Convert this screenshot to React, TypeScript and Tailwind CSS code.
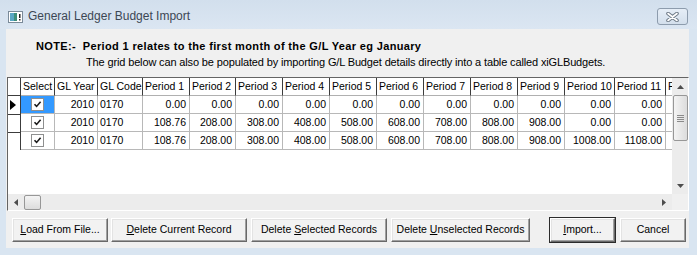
import React from 'react'

type Col = { label: string; w: number }

const COLS: Col[] = [
  { label: 'Select', w: 34 },
  { label: 'GL Year', w: 43 },
  { label: 'GL Code', w: 45 },
  { label: 'Period 1', w: 47 },
  { label: 'Period 2', w: 46 },
  { label: 'Period 3', w: 47 },
  { label: 'Period 4', w: 47 },
  { label: 'Period 5', w: 47 },
  { label: 'Period 6', w: 47 },
  { label: 'Period 7', w: 47 },
  { label: 'Period 8', w: 47 },
  { label: 'Period 9', w: 47 },
  { label: 'Period 10', w: 50 },
  { label: 'Period 11', w: 51 },
]

const ROWS = [
  { year: 2010, code: '0170', p: [0, 0, 0, 0, 0, 0, 0, 0, 0, 0, 0] },
  { year: 2010, code: '0170', p: [108.76, 208, 308, 408, 508, 608, 708, 808, 908, 0, 0] },
  { year: 2010, code: '0170', p: [108.76, 208, 308, 408, 508, 608, 708, 808, 908, 1008, 1108] },
]

const font = { fontFamily: '"Liberation Sans", Arial, sans-serif' }

function CheckBox() {
  return (
    <div className="w-[13px] h-[13px] bg-white border border-[#8e8f8f] flex items-center justify-center">
      <svg width="9" height="9" viewBox="0 0 9 9">
        <path d="M1.5 4.2 L3.6 6.4 L7.6 1.8" stroke="#1a1a1a" strokeWidth="1.6" fill="none" />
      </svg>
    </div>
  )
}

function Btn({ w, children, primary }: { w: number; children: React.ReactNode; primary?: boolean }) {
  return (
    <div
      style={{ width: w }}
      className={
        'h-[24px] flex items-center justify-center text-[10.5px] text-black bg-[#f2f2f2] border-t border-l border-t-white border-l-white border-r border-b border-r-[#696969] border-b-[#696969] shadow-[inset_-1px_-1px_0_#a0a0a0,inset_1px_1px_0_#e3e3e3] ' +
        (primary ? 'outline outline-1 outline-[#2b2b2b]' : '')
      }
    >
      {children}
    </div>
  )
}

function Arrow({ dir }: { dir: 'up' | 'down' | 'left' | 'right' }) {
  const d = {
    up: 'M0 4 L3.5 0 L7 4 Z',
    down: 'M0 0 L7 0 L3.5 4 Z',
    left: 'M4 0 L4 7 L0 3.5 Z',
    right: 'M0 0 L4 3.5 L0 7 Z',
  }[dir]
  const vert = dir === 'up' || dir === 'down'
  return (
    <svg width={vert ? 7 : 4} height={vert ? 4 : 7} viewBox={vert ? '0 0 7 4' : '0 0 4 7'}>
      <path d={d} fill="#4d4d4d" />
    </svg>
  )
}

export default function App() {
  return (
    <div className="w-[697px] h-[255px] bg-[#d9e5f1] flex flex-col overflow-hidden" style={font}>
      {/* title bar */}
      <div className="h-[29px] flex items-center bg-gradient-to-b from-[#d2dfed] to-[#dbe6f2] shrink-0">
        <svg width="15" height="12" viewBox="0 0 15 12" className="ml-[8px] mt-[4px]">
          <rect x="0.5" y="0.5" width="14" height="11" fill="#fff" stroke="#7a8a99" />
          <rect x="2" y="2" width="7" height="8" fill="#3f8f7a" />
          <rect x="2" y="2" width="4" height="8" fill="#5aa6c4" />
          <rect x="11" y="3" width="1.5" height="4" fill="#222" />
          <rect x="11" y="8" width="1.5" height="1.5" fill="#222" />
        </svg>
        <span className="ml-[5px] mt-[3px] text-[12px] text-[#3c4754]">General Ledger Budget Import</span>
        <div className="ml-auto mr-[9px] mt-[4px] w-[31px] h-[17px] rounded-[3px] border border-[#8d9cad] bg-gradient-to-b from-[#e6eef7] to-[#d3dfec] flex items-center justify-center">
          <svg width="13" height="10" viewBox="0 0 13 10">
            <path d="M2 1.5 L11 8.5 M11 1.5 L2 8.5" stroke="#6f7b88" strokeWidth="3.6" strokeLinecap="round" />
            <path d="M2 1.5 L11 8.5 M11 1.5 L2 8.5" stroke="#ffffff" strokeWidth="1.6" strokeLinecap="round" />
          </svg>
        </div>
      </div>

      <div className="flex flex-1">
        {/* client area */}
        <div className="ml-[6px] w-[683px] h-[219px] bg-[#f0f0f0] flex flex-col">
          <div className="pt-[9px] pl-[30px] h-[25px] text-[11px] tracking-[0.35px] font-bold text-black whitespace-pre leading-[16px]">
            {'NOTE:-  Period 1 relates to the first month of the G/L Year eg January'}
          </div>
          <div className="pl-[80px] h-[23px] text-[11px] tracking-[-0.14px] text-black leading-[17px]">
            The grid below can also be populated by importing G/L Budget details directly into a table called xiGLBudgets.
          </div>

          {/* grid */}
          <div className="ml-[1px] w-[682px] h-[134px] bg-white border-t border-l border-[#646464] border-b border-r border-b-white border-r-white flex">
            <div className="flex-1 flex flex-col min-w-0">
              <div className="flex-1 overflow-hidden text-[10.5px] text-black">
                {/* header row */}
                <div className="flex h-[18px] w-max">
                  <div className="w-[13px] h-[18px] border-r border-b border-[#3c3c3c] shrink-0" />
                  {COLS.map((c) => (
                    <div
                      key={c.label}
                      style={{ width: c.w }}
                      className="h-[18px] shrink-0 border-r border-r-[#3c3c3c] border-b border-b-[#b0b0b0] pl-[2px] leading-[17px] whitespace-nowrap overflow-hidden"
                    >
                      {c.label}
                    </div>
                  ))}
                  <div className="w-[12px] h-[18px] shrink-0 border-b border-b-[#b0b0b0] pl-[2px] leading-[17px]">P</div>
                </div>
                {ROWS.map((r, i) => (
                  <div key={i} className="flex h-[18px] w-max">
                    <div
                      className={
                        'w-[13px] h-[18px] shrink-0 border-r border-[#3c3c3c] flex items-center pl-[2px] ' +
                        (i > 0 ? 'border-t border-t-[#3c3c3c]' : '')
                      }
                    >
                      {i === 0 && (
                        <svg width="6" height="10" viewBox="0 0 6 10">
                          <path d="M0 0 L6 5 L0 10 Z" fill="#000" />
                        </svg>
                      )}
                    </div>
                    <div
                      style={{ width: 34 }}
                      className={
                        'h-[18px] shrink-0 border-r border-b border-[#b8b8b8] flex items-center justify-center ' +
                        (i === 0 ? 'bg-[#3399ff]' : '')
                      }
                    >
                      <CheckBox />
                    </div>
                    <div style={{ width: 43 }} className="h-[18px] shrink-0 border-r border-b border-[#b8b8b8] text-right pr-[3px] leading-[17px]">
                      {r.year}
                    </div>
                    <div style={{ width: 45 }} className="h-[18px] shrink-0 border-r border-b border-[#b8b8b8] pl-[2px] leading-[17px]">
                      {r.code}
                    </div>
                    {r.p.map((v, j) => (
                      <div
                        key={j}
                        style={{ width: COLS[j + 3].w }}
                        className="h-[18px] shrink-0 border-r border-b border-[#b8b8b8] text-right pr-[3px] leading-[17px] whitespace-nowrap overflow-hidden"
                      >
                        {v.toFixed(2)}
                      </div>
                    ))}
                    <div className="w-[12px] h-[18px] shrink-0 border-b border-[#b8b8b8]" />
                  </div>
                ))}
              </div>
              {/* horizontal scrollbar */}
              <div className="h-[16px] bg-[#ececec] flex items-center shrink-0">
                <div className="w-[16px] h-[16px] flex items-center justify-center">
                  <Arrow dir="left" />
                </div>
                <div className="w-[17px] h-[15px] rounded-[2px] border border-[#979797] bg-gradient-to-b from-[#f4f4f4] to-[#dcdcdc]" />
                <div className="ml-auto w-[16px] h-[16px] flex items-center justify-center">
                  <Arrow dir="right" />
                </div>
              </div>
            </div>
            {/* vertical scrollbar */}
            <div className="w-[16px] flex flex-col shrink-0">
              <div className="flex-1 bg-[#ececec] flex flex-col items-center">
                <div className="h-[17px] flex items-center justify-center">
                  <Arrow dir="up" />
                </div>
                <div className="w-[15px] h-[46px] rounded-[2px] border border-[#979797] bg-gradient-to-r from-[#f4f4f4] to-[#dcdcdc] flex flex-col items-center justify-center gap-[1px]">
                  <div className="w-[7px] h-[1px] bg-[#8a8a8a]" />
                  <div className="w-[7px] h-[1px] bg-[#8a8a8a]" />
                  <div className="w-[7px] h-[1px] bg-[#8a8a8a]" />
                  <div className="w-[7px] h-[1px] bg-[#8a8a8a]" />
                </div>
                <div className="mt-auto h-[17px] flex items-center justify-center">
                  <Arrow dir="down" />
                </div>
              </div>
              <div className="h-[16px] bg-[#f0f0f0]" />
            </div>
          </div>

          {/* buttons */}
          <div className="flex items-center mt-[7px] pl-[6px]">
            <Btn w={96}>
              <span><u>L</u>oad From File...</span>
            </Btn>
            <div className="ml-[3px]">
              <Btn w={136}>
                <span><u>D</u>elete Current Record</span>
              </Btn>
            </div>
            <div className="ml-[4px]">
              <Btn w={136}>
                <span>Delete <u>S</u>elected Records</span>
              </Btn>
            </div>
            <div className="ml-[4px]">
              <Btn w={139}>
                <span>Delete <u>U</u>nselected Records</span>
              </Btn>
            </div>
            <div className="ml-[20px]">
              <Btn w={65} primary>
                <span><u>I</u>mport...</span>
              </Btn>
            </div>
            <div className="ml-[5px]">
              <Btn w={66}>
                <span>Cancel</span>
              </Btn>
            </div>
          </div>
        </div>
      </div>
    </div>
  )
}
